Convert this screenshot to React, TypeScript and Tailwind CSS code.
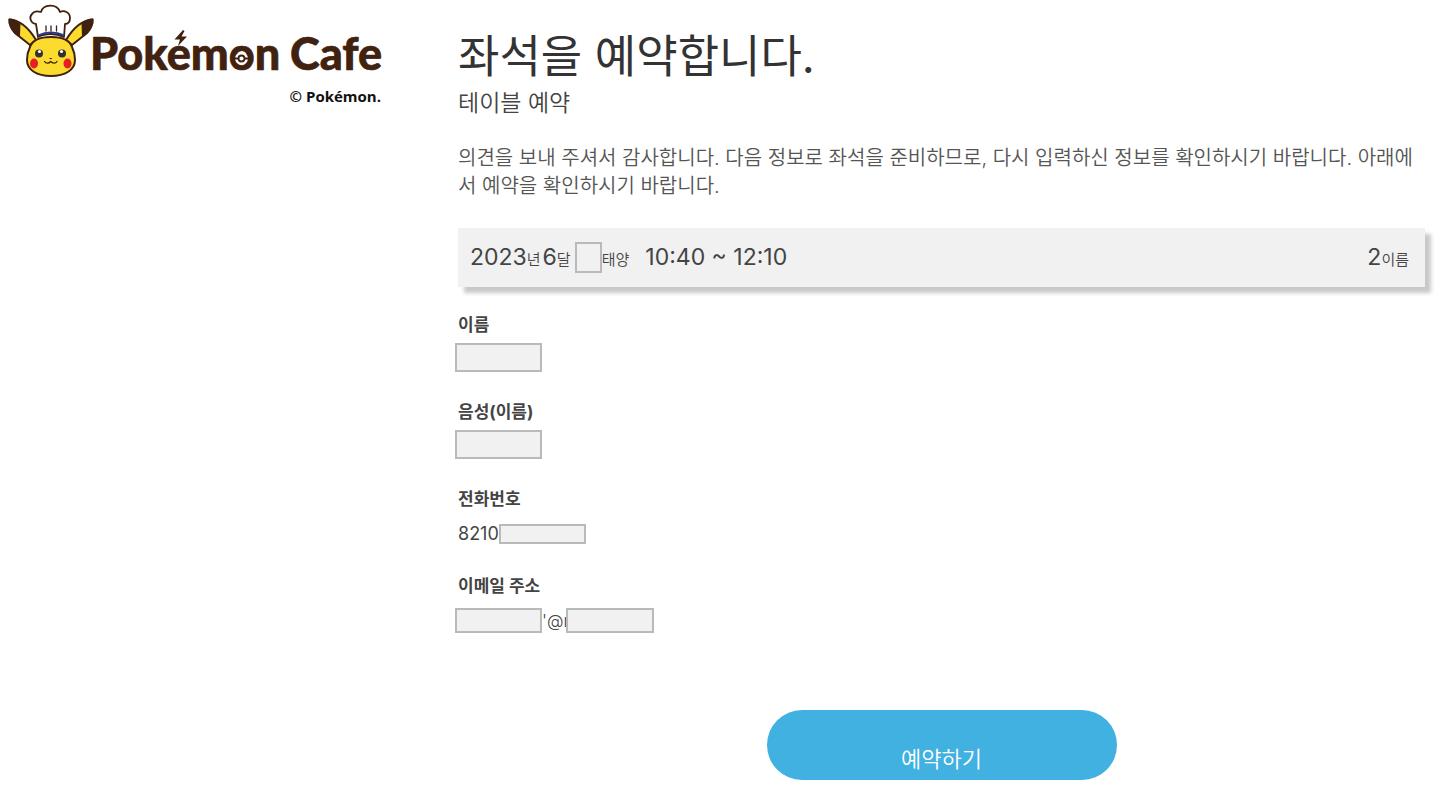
import React from "react";

const BROWN = "#41210f";

export default function App() {
  return (
    <div className="flex min-h-screen bg-white font-['Inter','Noto_Sans_CJK_KR',sans-serif] text-[#444]">
      <aside className="w-[458px] shrink-0 pl-2 pt-1">
        <Logo />
      </aside>

      <main className="min-w-0 flex-1 pr-3 pt-6">
        <h1 className="text-[45px] leading-[65px] text-[#333]">좌석을 예약합니다.</h1>
        <h2 className="text-[23px] font-[350] leading-7">테이블 예약</h2>
        <p className="mt-[27px] break-all text-[20px] font-[350] leading-7 text-[#555]">
          의견을 보내 주셔서 감사합니다. 다음 정보로 좌석을 준비하므로, 다시 입력하신 정보를 확인하시기
          바랍니다. 아래에서 예약을 확인하시기 바랍니다.
        </p>

        <section className="mt-7 flex h-[59px] items-center justify-between bg-[#f1f1f1] px-3 pr-4 text-[23px] shadow-[6px_6px_4px_#c8c8c8]">
          <div className="flex items-center">
            <span>2023</span>
            <Unit>년</Unit>
            <span className="ml-0.5">6</span>
            <Unit>달</Unit>
            <Masked label="일" className="ml-1 h-[31px] w-[27px]" />
            <Unit>태양</Unit>
            <span className="ml-4">10:40 ~ 12:10</span>
          </div>
          <div className="flex items-center">
            <span>2</span>
            <Unit>이름</Unit>
          </div>
        </section>

        <dl className="mt-6 text-[18px] leading-7">
          <Field label="이름">
            <Masked label="이름" className="-ml-[3px] h-[29px] w-[87px]" />
          </Field>
          <Field label="음성(이름)">
            <Masked label="음성(이름)" className="-ml-[3px] h-[29px] w-[87px]" />
          </Field>
          <Field label="전화번호" tall>
            <span>8210</span>
            <Masked label="전화번호" className="h-5 w-[87px]" />
          </Field>
          <Field label="이메일 주소" tall>
            <Masked label="이메일 아이디" className="-ml-[3px] h-[25px] w-[87px]" />
            <span className="text-[17px] font-[350]">'@r</span>
            <Masked label="이메일 도메인" className="relative -ml-1 h-[25px] w-[88px]" />
          </Field>
        </dl>

        <div className="mt-[67px] flex justify-center">
          <button
            type="button"
            className="h-[70px] w-[350px] rounded-full bg-[#40b1e0] pt-7 text-[22px] font-[350] leading-8 text-white"
          >
            예약하기
          </button>
        </div>
      </main>
    </div>
  );
}

function Unit({ children }: { children: React.ReactNode }) {
  return <small className="pt-1 text-[15px] font-[350] leading-6">{children}</small>;
}

function Field({
  label,
  tall,
  children,
}: {
  label: string;
  tall?: boolean;
  children: React.ReactNode;
}) {
  return (
    <div className="mb-4 h-[71px]">
      <dt className="text-[17px] font-bold">{label}</dt>
      <dd className={`flex items-center ${tall ? "h-[41px]" : "h-9"}`}>{children}</dd>
    </div>
  );
}

function Masked({ label, className }: { label: string; className: string }) {
  return (
    <input
      type="text"
      readOnly
      aria-label={label}
      className={`shrink-0 border-2 border-[#bababa] bg-[#f1f1f1] ${className}`}
    />
  );
}

function Logo() {
  return (
    <svg
      viewBox="8 4 376 104"
      className="h-[104px] w-[376px]"
      role="img"
      aria-label="Pokémon Cafe"
      strokeLinejoin="round"
      strokeLinecap="round"
    >
      {/* ears */}
      <g stroke={BROWN} strokeWidth="2">
        <path d="M30 45L15 33C11 29 9 23 9.500 19.500C17 20 27 25 36 40Z" fill="#fbdc2e" />
        <path d="M72 45L87 33C91 29 93 23 92.500 19.500C85 20 75 25 66 40Z" fill="#fbdc2e" />
        <path d="M19.500 23.500C16 21 12 19.500 9.500 19.500C9 24 12 31 19 36Z" fill={BROWN} />
        <path d="M82.500 23.500C86 21 90 19.500 92.500 19.500C93 24 90 31 83 36Z" fill={BROWN} />
      </g>
      {/* head */}
      <path
        d="M51 37C64 37 70 41 72 47C74 51 75 54 75 60C75 70 65 76 51 76C37 76 27 70 27 60C27 54 28 51 30 47C32 41 38 37 51 37Z"
        fill="#fbdc2e"
        stroke={BROWN}
        strokeWidth="2"
      />
      {/* chef hat */}
      <path
        d="M38 37L36 24C30 23 29 17 32 14C34 11 38 11 41 12C43 4 57 3 60 12C64 10 70 12 70 18C70 22 68 24 65 24L64 37C56 33 45 33 38 37Z"
        fill="#fff"
        stroke={BROWN}
        strokeWidth="1.800"
      />
      <path d="M46 26V31M51 26V31M56.500 26V31" stroke={BROWN} strokeWidth="1.300" />
      <path d="M39 35C46 31.500 56 31.500 63.500 35" fill="none" stroke="#253b94" strokeWidth="1.800" />
      {/* face */}
      <circle cx="39" cy="53.500" r="4" fill="#33302e" />
      <circle cx="62" cy="53.500" r="4" fill="#33302e" />
      <circle cx="39.500" cy="51.500" r="1.600" fill="#fff" />
      <circle cx="61.500" cy="51.500" r="1.600" fill="#fff" />
      <ellipse cx="34" cy="63.500" rx="4" ry="5" fill="#e81e25" />
      <ellipse cx="67.500" cy="63.500" rx="4" ry="5" fill="#e81e25" />
      <path
        d="M44.500 61.500C46 64 49 63.500 50.700 61.500C52.500 63.500 55.500 64 57 61.500"
        fill="none"
        stroke={BROWN}
        strokeWidth="1.300"
      />
      <path d="M50 58.500H51.500" stroke={BROWN} />

      {/* wordmark, the accent is a lightning bolt */}
      <g
        className="font-['Lato',sans-serif] text-[45px] font-black"
        fill={BROWN}
        stroke={BROWN}
        strokeWidth="0.6"
      >
        <text x="90" y="70">
          Pokemon
        </text>
        <text x="290" y="70">
          Cafe
        </text>
      </g>
      <path d="M183 30L174.500 39.500H180L178 46L187 36.500H181.500L184.500 31Z" fill={BROWN} />
      <circle cx="241.500" cy="58.500" r="6.500" fill="#fff" />
      <path d="M235 58.500H238M245 58.500H248" stroke={BROWN} strokeWidth="1.800" />
      <circle cx="241.500" cy="58.500" r="3" fill="#fff" stroke={BROWN} strokeWidth="1.800" />

      <text
        x="381"
        y="102"
        textAnchor="end"
        className="font-['Open_Sans',sans-serif] text-[15px] font-bold"
        fill="#111"
      >
        © Pokémon.
      </text>
    </svg>
  );
}
